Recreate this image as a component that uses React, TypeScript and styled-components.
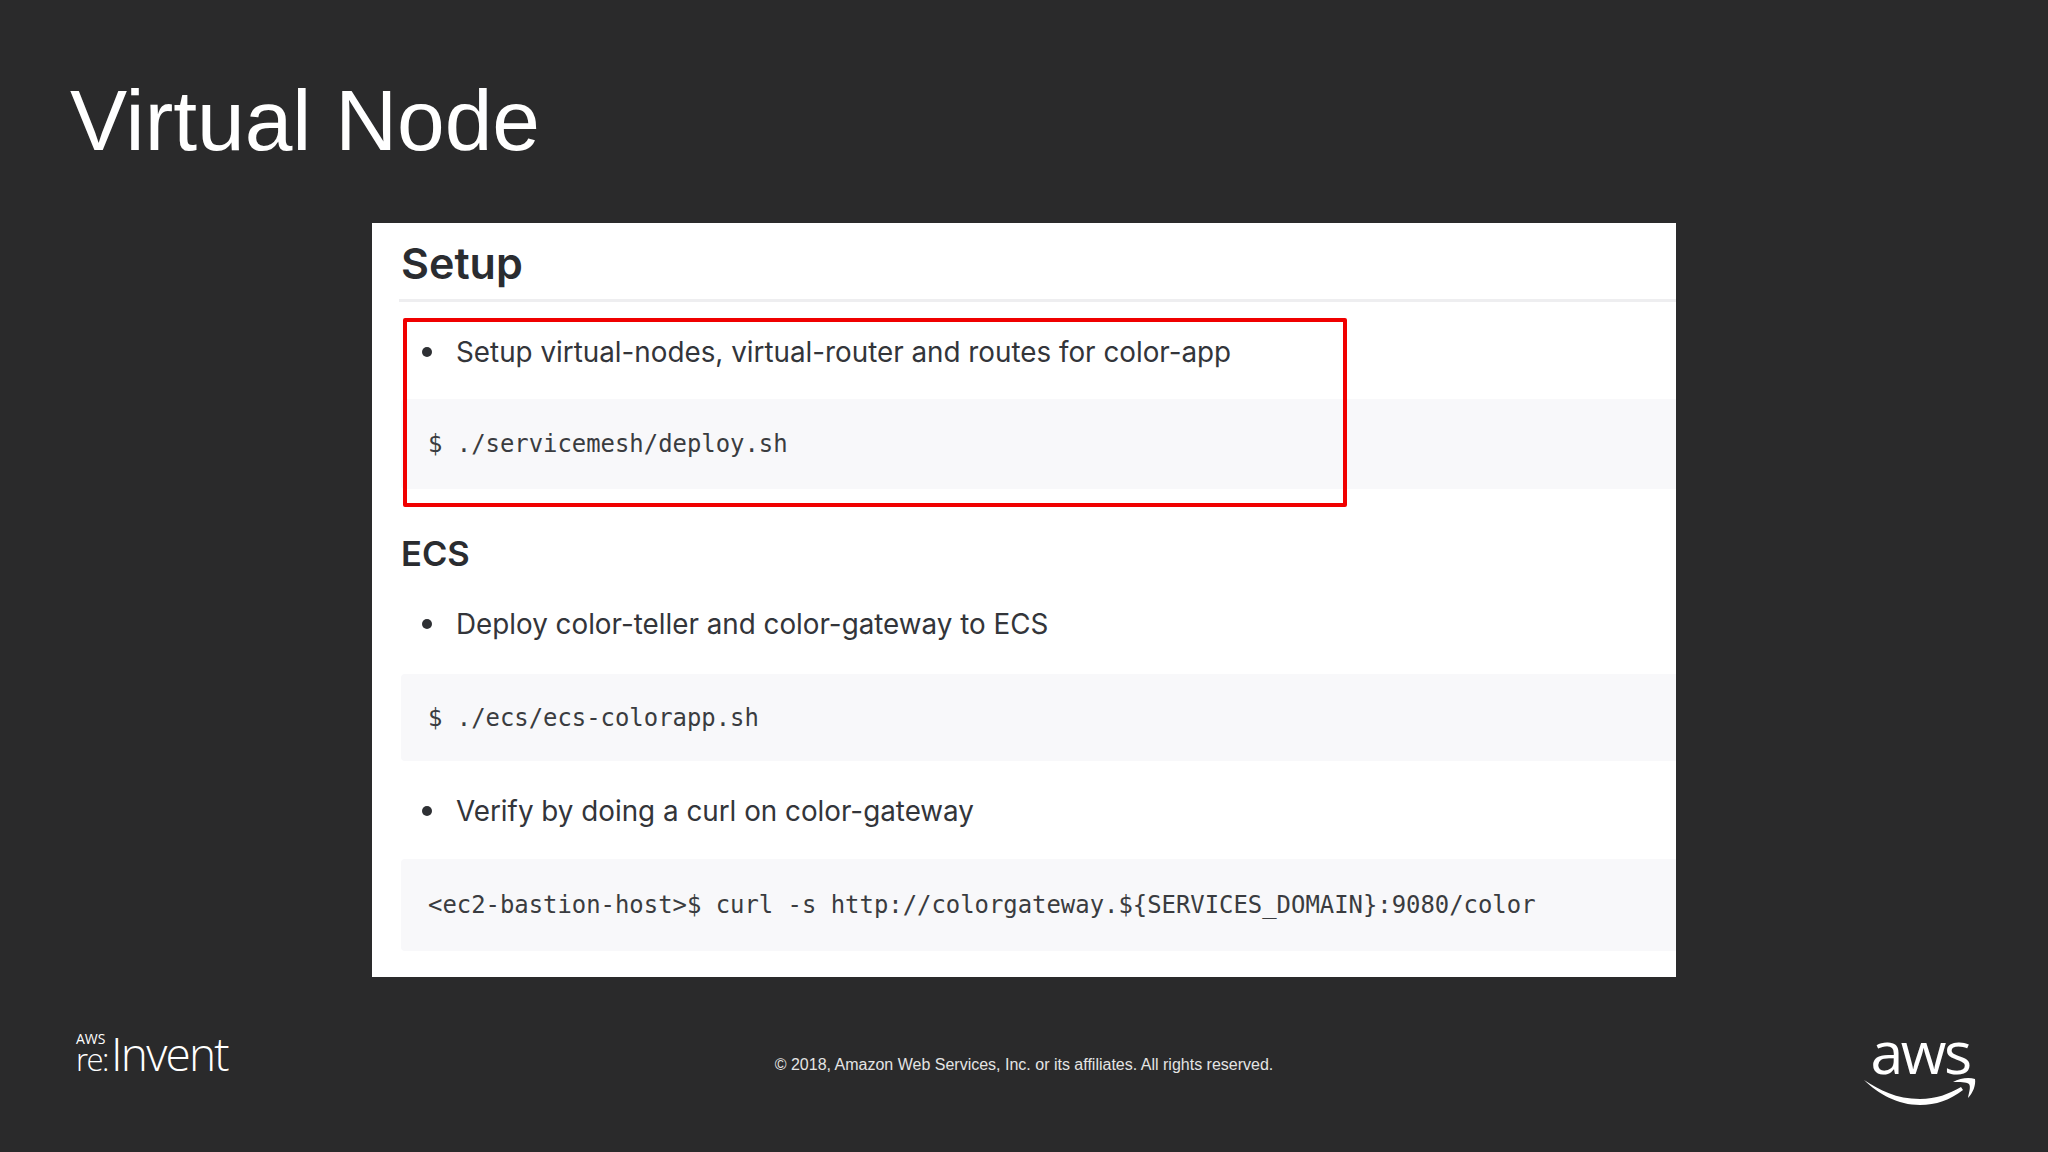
import React from "react";
import styled, { createGlobalStyle } from "styled-components";

const Global = createGlobalStyle`
  html, body { margin: 0; padding: 0; background: #2a2a2b; }
`;

const Slide = styled.div`
  width: 2048px;
  height: 1152px;
  display: flex;
  flex-direction: column;
  background: #2a2a2b;
  overflow: hidden;
`;

const TitleBar = styled.header`
  height: 223px;
  box-sizing: border-box;
  padding: 69px 0 0 70px;
`;

const Title = styled.h1`
  margin: 0;
  font: 400 85.7px/102px "Liberation Sans", Arial, sans-serif;
  color: #ffffff;
`;

const Panel = styled.main`
  position: relative;
  align-self: center;
  width: 1304px;
  height: 754px;
  box-sizing: border-box;
  padding-left: 29px;
  background: #ffffff;
`;

const Heading = styled.h2`
  margin: 0 0 30px -2px;
  padding-left: 2px;
  height: 79px;
  box-sizing: border-box;
  border-bottom: 3px solid #eeeef0;
  font: 600 43px/80px Inter, "Liberation Sans", sans-serif;
  color: #2a2c30;
`;

const SubHeading = styled.h3`
  margin: 39px 0 26px;
  font: 600 34.5px/51px Inter, "Liberation Sans", sans-serif;
  color: #2a2c30;
  height: 50px;
`;

const Item = styled.div`
  display: flex;
  align-items: center;
  height: 40px;
  padding-left: 21px;
  font: 400 27.8px/40px Inter, "Liberation Sans", sans-serif;
  color: #33353a;
  &::before {
    content: "";
    width: 10px;
    height: 10px;
    margin-right: 24px;
    border-radius: 50%;
    background: #2e3034;
  }
`;

const Code = styled.pre<{ $height: number; $top: number; $after?: number }>`
  display: flex;
  align-items: center;
  height: ${(p) => p.$height}px;
  margin: ${(p) => p.$top}px 0 ${(p) => p.$after ?? 0}px;
  padding-left: 27px;
  border-radius: 4px 0 0 4px;
  background: #f8f8fa;
  font: 400 23.9px/32px "DejaVu Sans Mono", "Liberation Mono", monospace;
  color: #3a3c40;
`;

const Highlight = styled.div`
  position: absolute;
  left: 31px;
  top: 95px;
  width: 944px;
  height: 189px;
  box-sizing: border-box;
  border: 4px solid #f00000;
  border-radius: 2px;
`;

const Footer = styled.footer`
  flex: 1;
  display: grid;
  grid-template-columns: 1fr auto 1fr;
  align-items: center;
  padding: 0 72px;
`;

const EventLogo = styled.div`
  display: flex;
  align-items: last baseline;
  gap: 3px;
  margin: -24px 0 0 4px;
  color: #ffffff;
  font-family: "Open Sans", sans-serif;
  font-weight: 300;
`;

const EventStack = styled.div`
  display: flex;
  flex-direction: column;
`;

const EventSmall = styled.span`
  font-size: 14px;
  line-height: 13px;
  font-weight: 400;
`;

const EventRe = styled.span`
  font-size: 31px;
  line-height: 28px;
  letter-spacing: -1.5px;
`;

const EventName = styled.span`
  font-size: 46px;
  line-height: 46px;
  letter-spacing: -1.8px;
`;

const Copyright = styled.div`
  font: 400 16px/20px "Liberation Sans", Arial, sans-serif;
  color: #e4e4e4;
`;

const AwsLogo = styled.div`
  justify-self: end;
  display: flex;
  flex-direction: column;
  align-items: center;
  color: #ffffff;
`;

const AwsText = styled.span`
  font: 500 59px/52px "Open Sans", sans-serif;
  letter-spacing: -2.5px;
`;

const Smile = () => (
  <svg width="112" height="28" viewBox="0 0 112 28" aria-hidden="true">
    <path d="M0 3C16 13 32 22 56 22C72 22 85 17 97 10L99 13C86 23 72 28 56 28C34 28 14 17 0 3Z" fill="#ffffff" />
    <path d="M89 5C96 1 105 0 111 2C112 8 109 16 104 21C105 15 107 10 105 7C102 5 96 5 89 5Z" fill="#ffffff" />
  </svg>
);

export default function App() {
  return (
    <>
      <Global />
      <Slide>
        <TitleBar>
          <Title>Virtual Node</Title>
        </TitleBar>
        <Panel>
          <Heading>Setup</Heading>
          <Item>Setup virtual-nodes, virtual-router and routes for color-app</Item>
          <Code $top={27} $height={90}>$ ./servicemesh/deploy.sh</Code>
          <SubHeading>ECS</SubHeading>
          <Item>Deploy color-teller and color-gateway to ECS</Item>
          <Code $top={30} $height={87} $after={30}>$ ./ecs/ecs-colorapp.sh</Code>
          <Item>Verify by doing a curl on color-gateway</Item>
          <Code $top={28} $height={92}>{"<ec2-bastion-host>$ curl -s http://colorgateway.${SERVICES_DOMAIN}:9080/color"}</Code>
          <Highlight />
        </Panel>
        <Footer>
          <EventLogo>
            <EventStack>
              <EventSmall>AWS</EventSmall>
              <EventRe>re:</EventRe>
            </EventStack>
            <EventName>Invent</EventName>
          </EventLogo>
          <Copyright>© 2018, Amazon Web Services, Inc. or its affiliates. All rights reserved.</Copyright>
          <AwsLogo>
            <AwsText>aws</AwsText>
            <Smile />
          </AwsLogo>
        </Footer>
      </Slide>
    </>
  );
}
